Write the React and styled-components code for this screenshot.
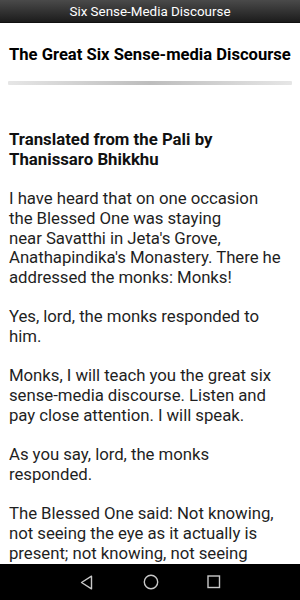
import React from "react";
import styled, { createGlobalStyle } from "styled-components";

const Global = createGlobalStyle`
  html, body { margin: 0; padding: 0; background: #fff; }
  body { font-family: Roboto, "Noto Sans", sans-serif; }
`;

const Screen = styled.div`
  width: 300px;
  height: 600px;
  display: flex;
  flex-direction: column;
  overflow: hidden;
  background: #fff;
`;

const TitleBar = styled.div`
  height: 22px;
  flex: none;
  background: linear-gradient(to bottom, #4a4a4a, #1c1c1c);
  color: #fff;
  font-size: 13.4px;
  display: flex;
  align-items: center;
  justify-content: center;
  border-bottom: 1px solid #111;
`;

const Content = styled.div`
  flex: 1;
  overflow: hidden;
  padding: 0 6px 0 9px;
`;

const Heading = styled.h1`
  margin: 22px 0 0;
  font-size: 16.6px;
  font-weight: 700;
  color: #000;
  line-height: 20px;
  white-space: nowrap;
`;

const Divider = styled.div`
  margin: 16px 2px 0 -1px;
  height: 4px;
  border-radius: 1px;
  background: linear-gradient(to right, #e6e6e6, #bdbdbd 50%, #e6e6e6);
`;

const Byline = styled.p`
  margin: 45px 0 0;
  font-weight: 700;
  font-size: 16.8px;
  line-height: 19.7px;
  color: #111;
`;

const Para = styled.p`
  margin: 19.7px 0 0;
  font-size: 16.8px;
  letter-spacing: -0.05px;
  line-height: 19.7px;
  color: #1f1f1f;
`;

const NavBar = styled.div`
  height: 36px;
  flex: none;
  background: #000;
  display: flex;
  align-items: center;
  justify-content: center;
`;

const NavBtn = styled.div`
  width: 63px;
  display: flex;
  justify-content: center;
  align-items: center;
  margin-right: ${(p) => (p.$shift ? "2px" : "0")};
`;

export default function App() {
  return (
    <Screen>
      <Global />
      <TitleBar>Six Sense-Media Discourse</TitleBar>
      <Content>
        <Heading>The Great Six Sense-media Discourse</Heading>
        <Divider />
        <Byline>
          Translated from the Pali by
          <br />
          Thanissaro Bhikkhu
        </Byline>
        <Para>
          I have heard that on one occasion
          <br />
          the Blessed One was staying
          <br />
          near Savatthi in Jeta's Grove,
          <br />
          Anathapindika's Monastery. There he
          <br />
          addressed the monks: Monks!
        </Para>
        <Para>Yes, lord, the monks responded to him.</Para>
        <Para>
          Monks, I will teach you the great six sense-media discourse. Listen and pay close attention. I will speak.
        </Para>
        <Para>As you say, lord, the monks responded.</Para>
        <Para>
          The Blessed One said: Not knowing, not seeing the eye as it actually is present; not knowing, not seeing forms as they actually are present...
        </Para>
      </Content>
      <NavBar>
        <NavBtn $shift>
          <svg width="13" height="15" viewBox="0 0 13 15">
            <path d="M11.5 1.2 L1.5 7.5 L11.5 13.8 Z" fill="none" stroke="#c8c8c8" strokeWidth="1.4" strokeLinejoin="round" />
          </svg>
        </NavBtn>
        <NavBtn>
          <svg width="16" height="16" viewBox="0 0 16 16">
            <circle cx="8" cy="8" r="6.7" fill="none" stroke="#c8c8c8" strokeWidth="1.4" />
          </svg>
        </NavBtn>
        <NavBtn>
          <svg width="14" height="14" viewBox="0 0 14 14">
            <rect x="1" y="1" width="11.5" height="11.5" fill="none" stroke="#c8c8c8" strokeWidth="1.4" />
          </svg>
        </NavBtn>
      </NavBar>
    </Screen>
  );
}
